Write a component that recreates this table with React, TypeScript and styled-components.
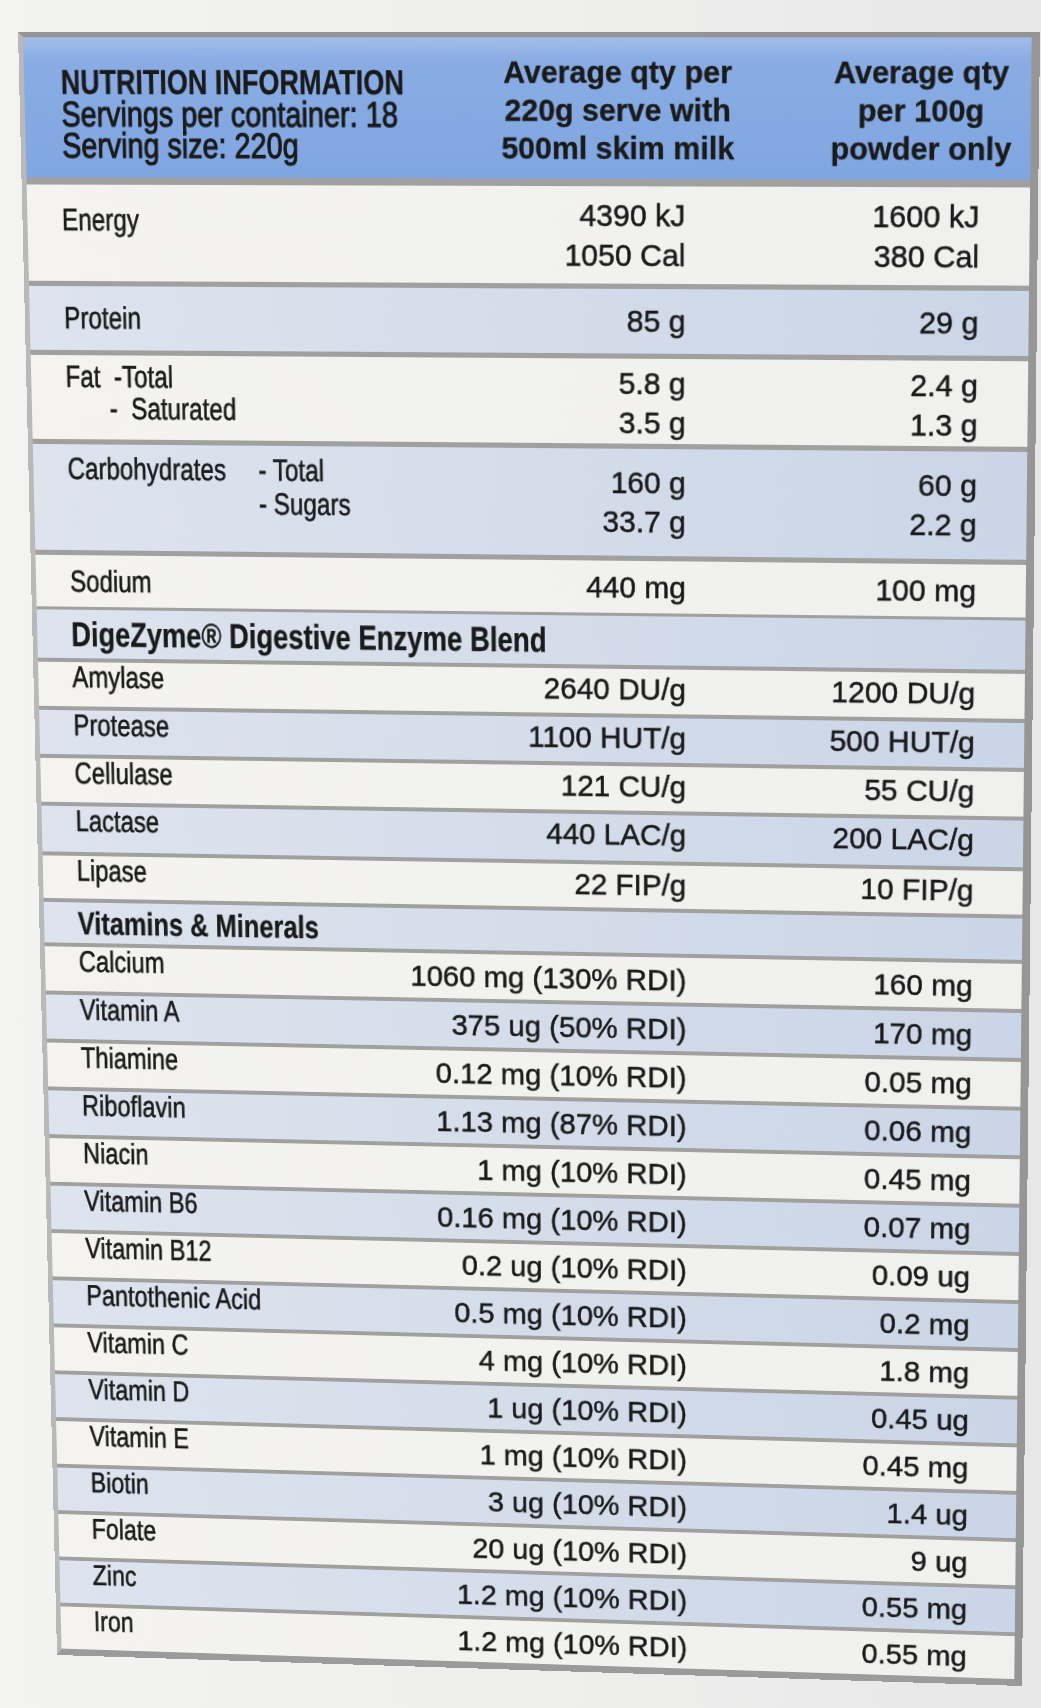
import React from "react";
import styled, { createGlobalStyle } from "styled-components";

// the label is photographed at a slight angle: the flat table is drawn
// at PANEL_W x PANEL_H and projected onto the four corners seen in the photo
const PANEL_W = 1010;
const PANEL_H = 1637;
type Pt = [number, number];
const CORNERS: [Pt, Pt, Pt, Pt] = [
  [18, 32],
  [1040, 32],
  [1022, 1686],
  [57, 1655],
];

function quadMatrix(w: number, h: number, [p0, p1, p2, p3]: [Pt, Pt, Pt, Pt]) {
  const [x0, y0] = p0;
  const [x1, y1] = p1;
  const [x2, y2] = p2;
  const [x3, y3] = p3;
  const dx1 = x1 - x2, dx2 = x3 - x2, dx3 = x0 - x1 + x2 - x3;
  const dy1 = y1 - y2, dy2 = y3 - y2, dy3 = y0 - y1 + y2 - y3;
  const det = dx1 * dy2 - dx2 * dy1;
  const g = (dx3 * dy2 - dx2 * dy3) / det;
  const k = (dx1 * dy3 - dx3 * dy1) / det;
  const a = x1 - x0 + g * x1, b = x3 - x0 + k * x3;
  const d = y1 - y0 + g * y1, e = y3 - y0 + k * y3;
  return `matrix3d(${a / w},${d / w},0,${g / w},${b / h},${e / h},0,${k / h},0,0,1,0,${x0},${y0},0,1)`;
}

const PANEL_TRANSFORM = quadMatrix(PANEL_W, PANEL_H, CORNERS);

// no condensed face is installed, so the narrow labels are Liberation Sans squeezed
const FONT = `"Liberation Sans", Arial, sans-serif`;
const INK = "#1a1a1a";

const GlobalStyle = createGlobalStyle`
  html, body {
    margin: 0;
    padding: 0;
  }
  body {
    background: linear-gradient(90deg, #f3f3f2 0%, #eeeeed 60%, #e7e7e7 100%);
    font-family: ${FONT};
    color: ${INK};
  }
`;

const Page = styled.div`
  width: 1041px;
  height: 1708px;
  overflow: hidden;
`;

const Panel = styled.div`
  box-sizing: border-box;
  width: ${PANEL_W}px;
  height: ${PANEL_H}px;
  transform-origin: 0 0;
  transform: ${PANEL_TRANSFORM};
  border-style: solid;
  border-width: 5px 8px 7px 5px;
  border-color: #949494 #969696 #9b9b9b #b9b9b9;
  display: flex;
  flex-direction: column;
  background: #a0a0a0;
  -webkit-text-stroke: 0.3px ${INK};
`;

const Narrow = styled.span<{ $squeeze?: number }>`
  display: inline-block;
  transform: scaleX(${(p) => p.$squeeze ?? 0.82});
  transform-origin: 0 0;
  white-space: pre;
`;

const Header = styled.div`
  height: 134px;
  display: grid;
  grid-template-columns: minmax(0, 1fr) 260px 200px;
  column-gap: 68px;
  padding: 0 7px 0 37px;
  background: linear-gradient(180deg, #a2bde8 0%, #89ace3 16%, #80a6e1 100%);
`;

const HeaderIntro = styled.div`
  padding-top: 27px;
  font-size: 34px;
  line-height: 30px;
  -webkit-text-stroke: 1px ${INK};
`;

const HeaderTitle = styled.div`
  font-size: 33px;
  font-weight: 700;
  -webkit-text-stroke: 0.3px ${INK};
`;

const HeaderCol = styled.div`
  padding-top: 15px;
  font-weight: 700;
  font-size: 30px;
  line-height: 36px;
  text-align: center;
  white-space: nowrap;
`;

type Tone = "white" | "blue";

const Row = styled.div<{ $tone: Tone; $h: number; $sep: number; $align?: "start" | "center" }>`
  flex: none;
  height: ${(p) => p.$h}px;
  margin-top: ${(p) => p.$sep}px;
  display: grid;
  grid-template-columns: minmax(0, 1fr) 300px 289px;
  align-items: ${(p) => p.$align ?? "start"};
  padding: 0 49px 0 35px;
  background: ${(p) =>
    p.$tone === "blue"
      ? "linear-gradient(90deg, #dde4ee 0%, #d4dcea 55%, #cad5e7 100%)"
      : "linear-gradient(90deg, #f4f3f0 0%, #f0f0ee 100%)"};
`;

const Label = styled.div<{ $pad?: number; $lh?: number }>`
  font-size: 30px;
  line-height: ${(p) => p.$lh ?? 30}px;
  padding-top: ${(p) => p.$pad ?? 0}px;
  white-space: pre;
  -webkit-text-stroke: 0.55px ${INK};
`;

const Indent = styled.div<{ $by: number }>`
  padding-left: ${(p) => p.$by}px;
`;

const Split = styled.div`
  display: flex;
  gap: 40px;
`;

const Section = styled.div<{ $size?: number }>`
  grid-column: 1 / -1;
  font-weight: 700;
  font-size: ${(p) => p.$size ?? 32}px;
  line-height: 34px;
  white-space: nowrap;
`;

const Value = styled.div<{ $pad?: number; $lh?: number }>`
  font-size: 30px;
  line-height: ${(p) => p.$lh ?? 34}px;
  padding-top: ${(p) => p.$pad ?? 0}px;
  text-align: right;
  white-space: nowrap;
  -webkit-text-stroke: 0.5px ${INK};
`;

const enzymes = [
  { name: "Amylase", mid: "2640 DU/g", right: "1200 DU/g", h: 44 },
  { name: "Protease", mid: "1100 HUT/g", right: "500 HUT/g", h: 44 },
  { name: "Cellulase", mid: "121 CU/g", right: "55 CU/g", h: 44 },
  { name: "Lactase", mid: "440 LAC/g", right: "200 LAC/g", h: 46 },
  { name: "Lipase", mid: "22 FIP/g", right: "10 FIP/g", h: 43 },
];

const vitamins = [
  ["Calcium", "1060 mg (130% RDI)", "160 mg"],
  ["Vitamin A", "375 ug (50% RDI)", "170 mg"],
  ["Thiamine", "0.12 mg (10% RDI)", "0.05 mg"],
  ["Riboflavin", "1.13 mg (87% RDI)", "0.06 mg"],
  ["Niacin", "1 mg (10% RDI)", "0.45 mg"],
  ["Vitamin B6", "0.16 mg (10% RDI)", "0.07 mg"],
  ["Vitamin B12", "0.2 ug (10% RDI)", "0.09 ug"],
  ["Pantothenic Acid", "0.5 mg (10% RDI)", "0.2 mg"],
  ["Vitamin C", "4 mg (10% RDI)", "1.8 mg"],
  ["Vitamin D", "1 ug (10% RDI)", "0.45 ug"],
  ["Vitamin E", "1 mg (10% RDI)", "0.45 mg"],
  ["Biotin", "3 ug (10% RDI)", "1.4 ug"],
  ["Folate", "20 ug (10% RDI)", "9 ug"],
  ["Zinc", "1.2 mg (10% RDI)", "0.55 mg"],
  ["Iron", "1.2 mg (10% RDI)", "0.55 mg"],
];

// rows alternate white / blue, starting with white under the header
const tone = (i: number): Tone => (i % 2 === 0 ? "white" : "blue");

export default function App() {
  return (
    <Page>
      <GlobalStyle />
      <Panel>
        <Header>
          <HeaderIntro>
            <Narrow>
              <HeaderTitle>NUTRITION INFORMATION</HeaderTitle>
            </Narrow>
            <Narrow $squeeze={0.85}>
              <div>Servings per container: 18</div>
              <div>Serving size: 220g</div>
            </Narrow>
          </HeaderIntro>
          <HeaderCol>
            Average qty per
            <br />
            220g serve with
            <br />
            500ml skim milk
          </HeaderCol>
          <HeaderCol>
            Average qty
            <br />
            per 100g
            <br />
            powder only
          </HeaderCol>
        </Header>

        <Row $tone="white" $h={93} $sep={7}>
          <Label $pad={19}>
            <Narrow>Energy</Narrow>
          </Label>
          <Value $pad={9} $lh={38}>
            4390 kJ
            <br />
            1050 Cal
          </Value>
          <Value $pad={9} $lh={38}>
            1600 kJ
            <br />
            380 Cal
          </Value>
        </Row>

        <Row $tone="blue" $h={62} $sep={5} $align="center">
          <Label>
            <Narrow>Protein</Narrow>
          </Label>
          <Value>85 g</Value>
          <Value>29 g</Value>
        </Row>

        <Row $tone="white" $h={82} $sep={5}>
          <Label $pad={5} $lh={31}>
            <Narrow>
              <div>Fat  -Total</div>
              <Indent $by={54}>-  Saturated</Indent>
            </Narrow>
          </Label>
          <Value $pad={5} $lh={38}>
            5.8 g
            <br />
            3.5 g
          </Value>
          <Value $pad={5} $lh={38}>
            2.4 g
            <br />
            1.3 g
          </Value>
        </Row>

        <Row $tone="blue" $h={104} $sep={5}>
          <Label $pad={7} $lh={33}>
            <Narrow>
              <Split>
                <span>Carbohydrates</span>
                <span>
                  - Total
                  <br />- Sugars
                </span>
              </Split>
            </Narrow>
          </Label>
          <Value $pad={14} $lh={38}>
            160 g
            <br />
            33.7 g
          </Value>
          <Value $pad={14} $lh={38}>
            60 g
            <br />
            2.2 g
          </Value>
        </Row>

        <Row $tone="white" $h={51} $sep={5} $align="center">
          <Label>
            <Narrow>Sodium</Narrow>
          </Label>
          <Value>440 mg</Value>
          <Value>100 mg</Value>
        </Row>

        <Row $tone="blue" $h={48} $sep={3} $align="center">
          <Section $size={34}>
            <Narrow>DigeZyme® Digestive Enzyme Blend</Narrow>
          </Section>
        </Row>

        {enzymes.map((z, i) => (
          <Row key={z.name} $tone={tone(i)} $h={z.h} $sep={4}>
            <Label>
              <Narrow>{z.name}</Narrow>
            </Label>
            <Value $pad={3}>{z.mid}</Value>
            <Value $pad={3}>{z.right}</Value>
          </Row>
        ))}

        <Row $tone="blue" $h={41} $sep={4} $align="center">
          <Section>
            <Narrow>Vitamins &amp; Minerals</Narrow>
          </Section>
        </Row>

        {vitamins.map(([name, mid, right], i) => (
          <Row key={name} $tone={tone(i)} $h={45} $sep={4}>
            <Label>
              <Narrow>{name}</Narrow>
            </Label>
            <Value $pad={6}>{mid}</Value>
            <Value $pad={6}>{right}</Value>
          </Row>
        ))}
      </Panel>
    </Page>
  );
}
